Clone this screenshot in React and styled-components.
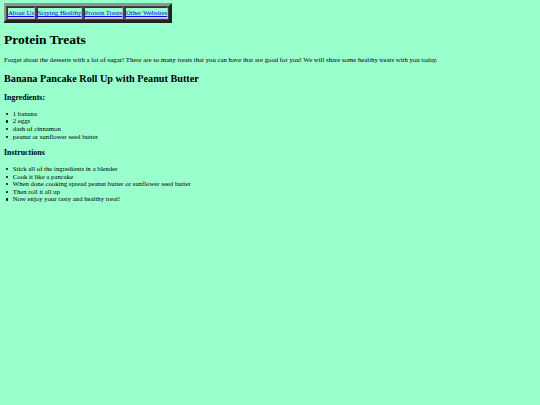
import React from "react";
import styled, { createGlobalStyle } from "styled-components";

const Global = createGlobalStyle`
  html, body { background: #99ffcc; }
  body {
    margin: 3px 4px;
    font-family: "Liberation Serif", "Times New Roman", serif;
    font-size: 6.75px;
    line-height: 7.6px;
    color: #000;
  }
`;

const Nav = styled.nav`
  display: inline-flex;
  gap: 1.5px;
  padding: 1px;
  margin-left: -1px;
  background: #444;
  border: 3px solid;
  border-color: #8a9a90 #222 #222 #8a9a90;
`;

const NavCell = styled.div`
  background: #99ffcc;
  border: 1px solid;
  border-color: #333 #bbb #bbb #333;
  padding: 1px 0;
`;

const NavLink = styled.a`
  color: #0000ee;
  text-decoration: underline;
`;

const Title = styled.h1`
  font-size: 13.5px;
  line-height: 15.5px;
  font-weight: bold;
  margin: 9px 0;
`;

const Para = styled.p`
  margin: 6.75px 0;
`;

const SubTitle = styled.h2`
  font-size: 10.2px;
  line-height: 11.7px;
  font-weight: bold;
  margin: 9.2px 0 8.4px;
`;

const Section = styled.h3`
  font-size: 7.9px;
  line-height: 9px;
  font-weight: bold;
  margin: 7.9px 0;
`;

const List = styled.ul`
  margin: 6.75px 0;
  padding-left: 8.8px;
  list-style: none;
`;

const Item = styled.li`
  position: relative;
  &::before {
    content: "";
    position: absolute;
    left: -7.3px;
    top: 2.9px;
    width: 2.4px;
    height: 2.4px;
    border-radius: 50%;
    background: #000;
  }
`;

const links = ["About Us", "Staying Healthy", "Protein Treats", "Other Websites"];
const ingredients = ["1 banana", "2 eggs", "dash of cinnamon", "peanut or sunflower seed butter"];
const steps = [
  "Stick all of the ingredients in a blender",
  "Cook it like a pancake",
  "When done cooking spread peanut butter or sunflower seed butter",
  "Then roll it all up",
  "Now enjoy your tasty and healthy treat!",
];

export default function App() {
  return (
    <>
      <Global />
      <Nav>
        {links.map((l) => (
          <NavCell key={l}>
            <NavLink href="#">{l}</NavLink>
          </NavCell>
        ))}
      </Nav>
      <Title>Protein Treats</Title>
      <Para>
        Forget about the desserts with a lot of sugar! There are so many treats that you can have that are good for you! We will share some healthy treats with you today.
      </Para>
      <SubTitle>Banana Pancake Roll Up with Peanut Butter</SubTitle>
      <Section>Ingredients:</Section>
      <List>
        {ingredients.map((i) => (
          <Item key={i}>{i}</Item>
        ))}
      </List>
      <Section>Instructions</Section>
      <List>
        {steps.map((s) => (
          <Item key={s}>{s}</Item>
        ))}
      </List>
    </>
  );
}
